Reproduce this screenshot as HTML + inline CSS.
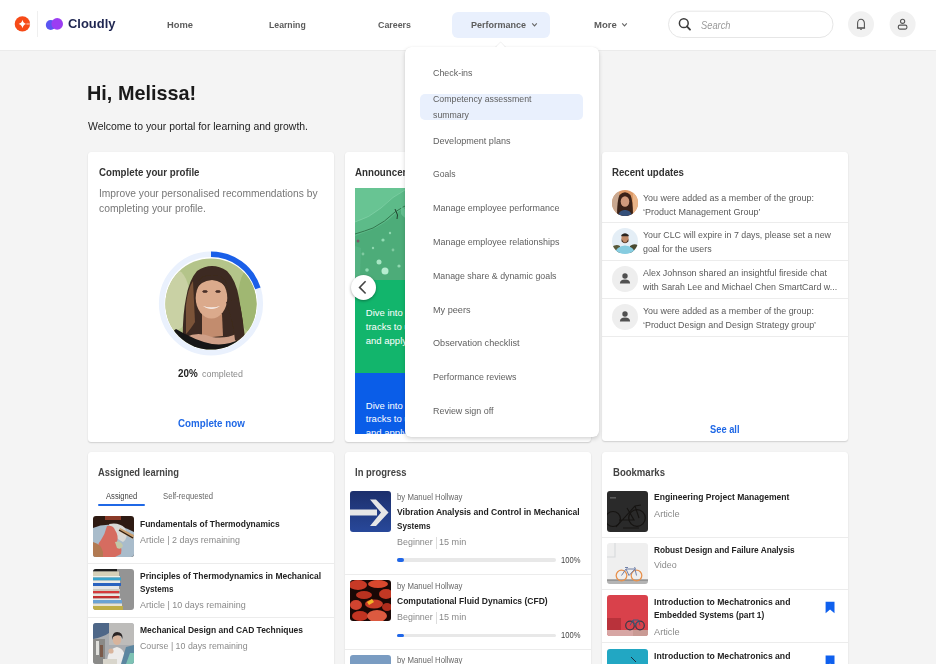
<!DOCTYPE html>
<html><head><meta charset="utf-8">
<style>
html,body{margin:0;padding:0}
body{width:936px;height:664px;overflow:hidden;position:relative;background:#f4f4f4;font-family:'Liberation Sans',sans-serif}
.a{position:absolute}
.t{position:absolute;white-space:pre;line-height:1;transform-origin:0 0}
.card{position:absolute;background:#fff;border-radius:3px;box-shadow:0 1px 1.5px rgba(0,0,0,0.15),0 0 1px rgba(0,0,0,0.07)}
.div{position:absolute;height:1px;background:#ececec}
.th{position:absolute;width:41px;height:41px;border-radius:3px;overflow:hidden}
.th svg{display:block}
</style></head><body>

<!-- header -->
<div class="a" style="left:0;top:0;width:936px;height:50px;background:#fff;border-bottom:1px solid #ebebeb;z-index:1"></div>
<svg class="a" style="left:0;top:0;z-index:2" width="130" height="49">
  <circle cx="22.4" cy="23.9" r="7.7" fill="#f64a17"/>
  <rect x="26.4" y="22.9" width="4" height="2" fill="#fff" opacity="0.4"/>
  <path d="M22.5 19.8 Q23.2 23.2 26 23.9 Q23.2 24.6 22.5 28.2 Q21.8 24.6 18.6 23.9 Q21.8 23.2 22.5 19.8Z" fill="#fff"/>
  <rect x="37" y="11" width="1" height="26" fill="#efefef"/>
  <circle cx="50.7" cy="25" r="4.9" fill="#5a55f2"/>
  <circle cx="57.2" cy="23.9" r="5.8" fill="#9b3df2"/>
</svg>
<div class="a" style="left:451.6px;top:11.6px;width:98.8px;height:26.3px;border-radius:6px;background:#e9f0fd;z-index:2"></div>
<svg class="a" style="left:0;top:0;z-index:3" width="936" height="49">
  <path d="M532.2 23.4 L534.5 25.9 L536.8 23.4" fill="none" stroke="#666" stroke-width="1.1"/>
  <path d="M622.2 23.4 L624.5 25.9 L626.8 23.4" fill="none" stroke="#666" stroke-width="1.1"/>
  <rect x="668.5" y="11.2" width="164.5" height="26.3" rx="13.1" fill="#fff" stroke="#e6e6e6" stroke-width="1"/>
  <circle cx="683.8" cy="23.2" r="4.4" fill="none" stroke="#3c3c3c" stroke-width="1.5"/>
  <path d="M686.9 26.4 L690 29.6" stroke="#3c3c3c" stroke-width="1.9" stroke-linecap="round"/>
  <circle cx="861" cy="24.2" r="13" fill="#f1f1f1"/>
  <path d="M857.6 28 L857.6 23.3 A3.4 4 0 0 1 864.4 23.3 L864.4 28 Z" fill="none" stroke="#555" stroke-width="1.1" stroke-linejoin="round"/>
  <path d="M856.9 28 L865.1 28" stroke="#555" stroke-width="1.1"/>
  <path d="M860 29.2 L862 29.2" stroke="#555" stroke-width="1"/>
  <circle cx="902.6" cy="24.2" r="13" fill="#f1f1f1"/>
  <circle cx="902.6" cy="21.3" r="2.1" fill="none" stroke="#555" stroke-width="1.1"/>
  <rect x="898.3" y="25.1" width="8.6" height="4" rx="1.6" fill="none" stroke="#555" stroke-width="1.1"/>
</svg>

<!-- cards row 1 -->
<div class="card" style="left:88px;top:152px;width:246px;height:290px"></div>
<div class="card" style="left:345px;top:152px;width:246px;height:290px"></div>
<div class="card" style="left:602px;top:152px;width:246px;height:289px"></div>
<!-- cards row 2 -->
<div class="card" style="left:88px;top:452px;width:246px;height:240px"></div>
<div class="card" style="left:345px;top:452px;width:246px;height:240px"></div>
<div class="card" style="left:602px;top:452px;width:246px;height:240px"></div>

<!-- profile ring + photo -->
<svg class="a" style="left:150px;top:242px;z-index:2" width="122" height="122" viewBox="150 242 122 122">
  <defs>
    <clipPath id="pc"><circle cx="211" cy="304" r="45.6"/></clipPath>
    <radialGradient id="bgg" cx="0.5" cy="0.4" r="0.7">
      <stop offset="0" stop-color="#9fb57a"/><stop offset="1" stop-color="#7f9a55"/>
    </radialGradient>
  </defs>
  <circle cx="211" cy="303.5" r="49.3" fill="none" stroke="#eaf1fd" stroke-width="5.6"/>
  <path d="M211 254.2 A49.3 49.3 0 0 1 257.9 288.3" fill="none" stroke="#1a5fe8" stroke-width="5.6"/>
  <filter id="soft" x="-10%" y="-10%" width="120%" height="120%"><feGaussianBlur stdDeviation="0.7"/></filter>
  <g clip-path="url(#pc)">
    <rect x="160" y="255" width="102" height="100" fill="#b4c48a"/>
    <g filter="url(#soft)">
    <ellipse cx="176" cy="300" rx="14" ry="30" fill="#c9d1a4"/>
    <ellipse cx="250" cy="300" rx="12" ry="32" fill="#a0b772"/>
    <path d="M183 345 Q182 318 186 298 Q189 280 197 271 Q212 261 227 271 Q236 280 239 298 Q243 320 246 345 Z" fill="#3d2a20"/>
    <path d="M186 305 Q188 288 193 281 L195 322 Q190 330 186 334Z" fill="#7a5238"/>
    <path d="M202 314 L222 314 L223 336 L202 338Z" fill="#c28c6e"/>
    <ellipse cx="211.5" cy="298" rx="15.8" ry="20.5" fill="#dbaa8c"/>
    <path d="M196 290 Q197 275 212 275 Q227 275 227.5 290 Q223 281 212 280 Q200 281 196 290Z" fill="#3d2a20"/>
    <path d="M186 337 Q198 331 212 337 Q226 339 236 334 L246 352 L178 352Z" fill="#cfa088"/>
    <path d="M166 352 Q168 334 176 329 Q196 341 212 344 Q228 346 240 339 Q252 340 258 352Z" fill="#171514"/>
    <path d="M226 302 Q233 320 235 340 L243 347 Q245 320 238 298Z" fill="#3d2a20"/>
    </g>
    <path d="M203 306 Q211.5 312 220 306 Q211.5 309 203 306Z" fill="#f4e8e2"/>
    <ellipse cx="205" cy="291.5" rx="2.6" ry="1.1" fill="#4a3028"/>
    <ellipse cx="218" cy="291.5" rx="2.6" ry="1.1" fill="#4a3028"/>
  </g>
    <path d="M203 306 Q211.5 312 220 306 Q211.5 309 203 306Z" fill="#f4e8e2"/>
    <ellipse cx="205" cy="291.5" rx="2.6" ry="1.2" fill="#4a3028"/>
    <ellipse cx="218" cy="291.5" rx="2.6" ry="1.2" fill="#4a3028"/>
  </g>
</svg>

<!-- card2 announcement -->
<svg class="a" style="left:355px;top:188px;z-index:2" width="60" height="92">
  <rect width="60" height="92" fill="#4dac79"/>
  <path d="M0 0 L60 0 L60 14 Q48 20 40 26 Q30 36 16 42 Q8 45 0 48Z" fill="#5dbb89"/>
  <path d="M0 34 Q14 30 26 20 Q38 8 50 2 L56 0 L0 0Z" fill="#68c493"/>
  <path d="M0 46 Q10 43 18 40 Q30 34 40 24 Q48 18 60 14" stroke="#33784f" stroke-width="1" fill="none"/>
  <path d="M0 34 Q14 30 26 20 Q38 8 50 2" stroke="#8ad6ae" stroke-width="0.7" fill="none" opacity="0.8"/>
  <path d="M40 21 L42.5 27 L42 31" stroke="#22402e" stroke-width="1" fill="none"/>
  <path d="M46 18 Q52 24 58 20 L60 30 Q52 34 46 26Z" fill="#6cc99a" opacity="0.7"/>
  <circle cx="24" cy="74" r="2.5" fill="#a8e6c4"/>
  <circle cx="30" cy="83" r="3.5" fill="#b6ecd0"/>
  <circle cx="12" cy="82" r="1.8" fill="#92dcb4"/>
  <circle cx="28" cy="52" r="1.6" fill="#92dcb4"/>
  <circle cx="18" cy="60" r="1.2" fill="#8fd8b0"/>
  <circle cx="8" cy="66" r="1.4" fill="#7fcaa0"/>
  <circle cx="38" cy="62" r="1.4" fill="#7fcaa0"/>
  <circle cx="44" cy="78" r="1.6" fill="#8fd8b0"/>
  <circle cx="35" cy="45" r="1.2" fill="#8fd8b0"/>
  <circle cx="3" cy="53" r="1.5" fill="#7a5a6a"/>
  <path d="M0 58 L6 60 L5 90 L0 90Z" fill="#58b484" opacity="0.8"/>
</svg>
<div class="a" style="left:355px;top:279.5px;width:200px;height:93.1px;background:#12b56c;z-index:2"></div>
<div class="a" style="left:355px;top:372.6px;width:200px;height:61px;background:#0a5de8;overflow:hidden;z-index:2"></div>
<div class="a" style="left:350.6px;top:274.8px;width:25.2px;height:25.2px;border-radius:50%;background:#fff;box-shadow:0 1px 3px rgba(0,0,0,0.35);z-index:3"></div>
<svg class="a" style="left:350px;top:274px;z-index:4" width="26" height="26">
  <path d="M15.6 7.3 L9.6 13.4 L15.6 19.5" fill="none" stroke="#444" stroke-width="1.6"/>
</svg>

<!-- card3 recent updates -->
<div class="div" style="left:602px;top:222px;width:246px"></div>
<div class="div" style="left:602px;top:260px;width:246px"></div>
<div class="div" style="left:602px;top:298px;width:246px"></div>
<div class="div" style="left:602px;top:336px;width:246px"></div>
<svg class="a" style="left:610px;top:188px;z-index:2" width="30" height="146" viewBox="610 188 30 146">
  <defs>
    <clipPath id="a1"><circle cx="625" cy="203" r="13"/></clipPath>
    <clipPath id="a2"><circle cx="625" cy="241" r="13"/></clipPath>
  </defs>
  <g clip-path="url(#a1)">
    <rect x="610" y="188" width="30" height="30" fill="#dd9a68"/>
    <rect x="610" y="188" width="9" height="30" fill="#c9a890"/>
    <rect x="633" y="188" width="7" height="30" fill="#e9b488"/>
    <path d="M617 218 Q617 200 619.5 195 Q625 189.5 630.5 195 Q633 200 633 218Z" fill="#3a2218"/>
    <ellipse cx="625" cy="201.5" rx="4.3" ry="5.3" fill="#d09a7c"/>
    <path d="M617 218 Q619 209.5 625 210 Q631 209.5 633 218Z" fill="#35507a"/>
  </g>
  <g clip-path="url(#a2)">
    <rect x="610" y="226" width="30" height="30" fill="#e4eef6"/>
    <path d="M610 248 Q616 243 620 246 L620 256 L610 256Z" fill="#5a5a3a"/>
    <path d="M630 246 Q635 242 640 247 L640 256 L630 256Z" fill="#4a4a30"/>
    <ellipse cx="625" cy="238.5" rx="3.6" ry="4.4" fill="#c08a68"/>
    <path d="M621.6 239 Q625 246 628.4 239 L628.4 241.5 Q625 245 621.6 241.5Z" fill="#4a3426"/>
    <path d="M621.3 235 Q625 231.5 628.7 235 L628.7 236.3 L621.3 236.3Z" fill="#2a2420"/>
    <path d="M614 256 Q615 246.5 625 245.5 Q635 246.5 636 256Z" fill="#86cce0"/>
  </g>
  <circle cx="625" cy="279" r="13" fill="#eeeeee"/>
  <circle cx="625" cy="317" r="13" fill="#eeeeee"/>
  <circle cx="625" cy="276" r="2.7" fill="#505050"/>
  <path d="M619.9 283.6 Q619.9 279.4 625 279.4 Q630.1 279.4 630.1 283.6Z" fill="#505050"/>
  <circle cx="625" cy="314" r="2.7" fill="#505050"/>
  <path d="M619.9 321.6 Q619.9 317.4 625 317.4 Q630.1 317.4 630.1 321.6Z" fill="#505050"/>
</svg>

<!-- dropdown -->
<div class="a" style="left:405px;top:47.2px;width:194px;height:389.4px;background:#fff;border-radius:6px;box-shadow:0 2px 4px rgba(0,0,0,0.16),0 0 1px rgba(0,0,0,0.1);z-index:10"></div>
<svg class="a" style="left:490px;top:39px;z-index:9" width="22" height="12"><path d="M4 9.5 L10.6 3 L17 9.5Z" fill="#fff" stroke="rgba(0,0,0,0.07)" stroke-width="1"/></svg>
<svg class="a" style="left:490px;top:39px;z-index:11" width="22" height="12"><path d="M3 12 L10.6 3.6 L18 12Z" fill="#fff"/></svg>
<div class="a" style="left:420px;top:93.5px;width:163.4px;height:26.3px;background:#e9f0fd;border-radius:5px;z-index:11"></div>

<!-- card4 assigned learning -->
<div class="a" style="left:98px;top:504.2px;width:46.6px;height:2px;border-radius:1px;background:#1f68e6;z-index:2"></div>
<div class="div" style="left:88px;top:563px;width:246px"></div>
<div class="div" style="left:88px;top:617px;width:246px"></div>
<div class="th" style="left:93px;top:516.3px;z-index:2">
  <svg width="41" height="41">
    <rect width="41" height="41" fill="#2e1a12"/>
    <rect x="12" y="0" width="16" height="4" fill="#8a3a28"/>
    <path d="M0 12 Q18 4 41 16 L41 41 L0 41Z" fill="#a9bccb"/>
    <path d="M16 8 Q26 6 32 12 Q36 22 30 26 Q22 22 18 16Z" fill="#d9d9d6"/>
    <path d="M14 10 Q20 9 22 14 Q26 20 24 26 Q30 30 28 38 L22 41 L6 41 Q2 30 8 24 Q12 18 14 10Z" fill="#d66c60"/>
    <path d="M0 26 Q8 28 10 36 L10 41 L0 41Z" fill="#b27a52"/>
    <path d="M22 26 Q28 24 30 30 Q28 34 24 32Z" fill="#c2c8a8"/>
    <path d="M27 12 L41 19 L40 23 L26 15Z" fill="#c9a070"/>
    <path d="M26 14 L40 22" stroke="#2a1a10" stroke-width="1.2"/>
  </svg>
</div>
<div class="th" style="left:93px;top:568.6px;z-index:2">
  <svg width="41" height="41">
    <rect width="41" height="41" fill="#949494"/>
    <rect x="0" y="0" width="24" height="2.5" fill="#1e1e1e"/>
    <rect x="0" y="2.5" width="26" height="4.5" fill="#d6d0b8"/>
    <rect x="0" y="7" width="27" height="1.5" fill="#f0f0ea"/>
    <rect x="0" y="8.5" width="28" height="3" fill="#3aa4cc"/>
    <rect x="0" y="11.5" width="27" height="2.5" fill="#ecebe6"/>
    <rect x="0" y="14" width="28" height="3" fill="#2a62bf"/>
    <rect x="0" y="17" width="26" height="3" fill="#e6e6e6"/>
    <rect x="0" y="20" width="27" height="2" fill="#cfcac0"/>
    <rect x="0" y="22" width="26" height="2.5" fill="#d43a3a"/>
    <rect x="0" y="24.5" width="27" height="2.5" fill="#e8e6e0"/>
    <rect x="0" y="27" width="26" height="2.5" fill="#c2302e"/>
    <rect x="0" y="29.5" width="28" height="1.5" fill="#e8e8e8"/>
    <rect x="0" y="31" width="29" height="3.5" fill="#6aa2d4"/>
    <rect x="0" y="34.5" width="29" height="2.5" fill="#e6e2d6"/>
    <rect x="0" y="37" width="30" height="4" fill="#bfae48"/>
  </svg>
</div>
<div class="th" style="left:93px;top:622.5px;z-index:2">
  <svg width="41" height="41">
    <rect width="41" height="41" fill="#a9acb0"/>
    <rect x="16" y="0" width="25" height="22" fill="#bdbcba"/>
    <path d="M0 0 L16 0 L16 10 Q10 14 0 16Z" fill="#4e6788"/>
    <rect x="0" y="16" width="12" height="25" fill="#8a8a88"/>
    <rect x="3" y="18" width="3" height="14" fill="#e0e0dc"/>
    <rect x="7" y="22" width="3" height="12" fill="#7a5a4a"/>
    <ellipse cx="24" cy="17" rx="4.2" ry="5" fill="#d8b49c"/>
    <path d="M19 17 Q19 9 24 9 Q30 9 29.5 16 L28 13 Q24 11 20 14Z" fill="#2a2424"/>
    <path d="M14 41 Q14 26 24 24 Q33 26 33 41Z" fill="#ecebea"/>
    <circle cx="18" cy="28" r="2.6" fill="#d8b49c"/>
    <path d="M28 41 L33 24 L41 22 L41 41Z" fill="#5c86a0"/>
    <path d="M33 41 L37 30 L41 30 L41 41Z" fill="#7ec2b4"/>
    <rect x="10" y="36" width="14" height="5" fill="#d9d6cc"/>
  </svg>
</div>

<!-- card5 in progress -->
<div class="div" style="left:345px;top:574px;width:246px"></div>
<div class="div" style="left:345px;top:649px;width:246px"></div>
<div class="th" style="left:350px;top:490.6px;z-index:2">
  <svg width="41" height="41">
    <defs><linearGradient id="ag" x1="0" y1="0" x2="0" y2="1"><stop offset="0" stop-color="#1c2f6c"/><stop offset="1" stop-color="#28489a"/></linearGradient></defs>
    <rect width="41" height="41" fill="url(#ag)"/>
    <path d="M0 18.5 L27 18.5 L27 24.5 L0 24.5Z" fill="#e6e6e6"/>
    <path d="M20 8.5 L26 8.5 L38.5 21.5 L26 35 L20 35 L31 21.5Z" fill="#e6e6e6"/>
  </svg>
</div>
<div class="th" style="left:350px;top:579.5px;z-index:2">
  <svg width="41" height="41">
    <rect width="41" height="41" fill="#1a0806"/>
    <ellipse cx="8" cy="5" rx="9" ry="5" fill="#c83a26"/>
    <ellipse cx="28" cy="4" rx="10" ry="4" fill="#d8482e"/>
    <ellipse cx="36" cy="14" rx="7" ry="5" fill="#c23824"/>
    <ellipse cx="14" cy="15" rx="8" ry="4" fill="#b83220"/>
    <ellipse cx="6" cy="25" rx="6" ry="5" fill="#d04430"/>
    <ellipse cx="24" cy="24" rx="9" ry="4.5" fill="#c83c28"/>
    <ellipse cx="37" cy="27" rx="5" ry="4" fill="#b02c1c"/>
    <ellipse cx="10" cy="36" rx="8" ry="5" fill="#c23422"/>
    <ellipse cx="27" cy="36" rx="10" ry="6" fill="#dc5a40"/>
    <path d="M17 22 L22 19 L24 22 L19 25Z" fill="#f2b428"/>
  </svg>
</div>
<div class="th" style="left:350px;top:655px;z-index:2">
  <svg width="41" height="41"><rect width="41" height="41" fill="#7a9cc2"/></svg>
</div>
<div class="a" style="left:396.8px;top:558.2px;width:158.8px;height:3.8px;border-radius:2px;background:#e8e8e8;z-index:2"></div>
<div class="a" style="left:396.8px;top:558.2px;width:7.6px;height:3.8px;border-radius:2px;background:#1f66e8;z-index:3"></div>
<div class="a" style="left:396.8px;top:633.5px;width:158.8px;height:3.8px;border-radius:2px;background:#e8e8e8;z-index:2"></div>
<div class="a" style="left:396.8px;top:633.5px;width:7.6px;height:3.8px;border-radius:2px;background:#1f66e8;z-index:3"></div>
<div class="a" style="left:435.5px;top:536.5px;width:1px;height:12px;background:#dddddd;z-index:2"></div>
<div class="a" style="left:435.5px;top:612px;width:1px;height:12px;background:#dddddd;z-index:2"></div>

<!-- card6 bookmarks -->
<div class="div" style="left:602px;top:537px;width:246px"></div>
<div class="div" style="left:602px;top:589px;width:246px"></div>
<div class="div" style="left:602px;top:642px;width:246px"></div>
<div class="th" style="left:607px;top:490.6px;z-index:2">
  <svg width="42" height="41">
    <rect width="42" height="41" fill="#2a2a2a"/>
    <circle cx="30" cy="27" r="8.3" fill="none" stroke="#161412" stroke-width="1.3"/>
    <circle cx="6" cy="28" r="7.5" fill="none" stroke="#161412" stroke-width="1.2"/>
    <path d="M9 36 L28 15 L34 14 M12 29 L27 29 L20 17 M28 15 L32 27 M16 37 L32 37" fill="none" stroke="#161412" stroke-width="1.1"/>
    <rect x="3" y="6.5" width="6" height="0.8" fill="#888"/>
  </svg>
</div>
<div class="th" style="left:607px;top:542.5px;z-index:2">
  <svg width="42" height="41">
    <rect width="42" height="41" fill="#efefef"/>
    <path d="M8 0 L8 14 L0 14" fill="none" stroke="#d8dadc" stroke-width="1.2"/>
    <rect x="0" y="37" width="42" height="4" fill="#b4b4b4"/>
    <rect x="0" y="36.5" width="42" height="0.9" fill="#6a6a6a"/>
    <circle cx="14.5" cy="32.5" r="5.3" fill="none" stroke="#e8924e" stroke-width="1.3"/>
    <circle cx="29.5" cy="32.5" r="5.3" fill="none" stroke="#e8924e" stroke-width="1.3"/>
    <path d="M14.5 32.5 L19 26 L28 26 L29.5 32.5 M19 26 L22 32.5 L28 26 M18 24.5 L21 24.5 M27.5 24 L28.5 26" fill="none" stroke="#7080a8" stroke-width="1"/>
  </svg>
</div>
<div class="th" style="left:607px;top:594.7px;z-index:2">
  <svg width="42" height="41">
    <rect width="42" height="41" fill="#d9414b"/>
    <rect x="0" y="23" width="14" height="12" fill="#b9323b"/>
    <rect x="0" y="35" width="42" height="6" fill="#d7a6a4"/>
    <rect x="26" y="35" width="16" height="6" fill="#c99a94"/>
    <circle cx="23" cy="30.5" r="4.3" fill="none" stroke="#3a3a48" stroke-width="1.2"/>
    <circle cx="33" cy="30.5" r="4.3" fill="none" stroke="#3a3a48" stroke-width="1.2"/>
    <path d="M23 30.5 L26 25 L31.5 25 L33 30.5 M26 25 L28 30.5 L31.5 25" fill="none" stroke="#4a5a78" stroke-width="1"/>
  </svg>
</div>
<div class="th" style="left:607px;top:648.9px;z-index:2">
  <svg width="42" height="41"><rect width="42" height="41" fill="#22a7c3"/><path d="M24 8 L29 13" stroke="#1a3040" stroke-width="1"/></svg>
</div>
<svg class="a" style="left:820px;top:598px;z-index:2" width="20" height="70">
  <path d="M5.6 3.7 L14.5 3.7 L14.5 15.3 L10.05 11.6 L5.6 15.3Z" fill="#0f60ee"/>
  <path d="M5.6 57.6 L14.5 57.6 L14.5 69.2 L10.05 65.5 L5.6 69.2Z" fill="#0f60ee"/>
</svg>

<div class="t" style="left:67.80px;top:18.27px;font-size:12.2px;font-weight:700;color:#1e2550;z-index:2;transform:scaleX(1.0629);">Cloudly</div>
<div class="t" style="left:167.40px;top:20.07px;font-size:9.9px;font-weight:700;color:#5c5c5c;z-index:2;transform:scaleX(0.9476);">Home</div>
<div class="t" style="left:269.00px;top:20.07px;font-size:9.9px;font-weight:700;color:#5c5c5c;z-index:2;transform:scaleX(0.8800);">Learning</div>
<div class="t" style="left:377.50px;top:20.07px;font-size:9.9px;font-weight:700;color:#5c5c5c;z-index:2;transform:scaleX(0.8968);">Careers</div>
<div class="t" style="left:470.90px;top:20.22px;font-size:9.9px;font-weight:700;color:#5c5c5c;z-index:2;transform:scaleX(0.9126);">Performance</div>
<div class="t" style="left:594.00px;top:20.22px;font-size:9.9px;font-weight:700;color:#5c5c5c;z-index:2;transform:scaleX(0.9621);">More</div>
<div class="t" style="left:700.60px;top:19.61px;font-size:10.5px;font-weight:400;color:#9a9a9a;z-index:5;font-style:italic;transform:scaleX(0.8864);">Search</div>
<div class="t" style="left:87.00px;top:82.12px;font-size:21px;font-weight:700;color:#1a1a1a;z-index:2;transform:scaleX(0.9451);">Hi, Melissa!</div>
<div class="t" style="left:88.30px;top:120.69px;font-size:11px;font-weight:400;color:#1c1c1c;z-index:2;transform:scaleX(0.9502);">Welcome to your portal for learning and growth.</div>
<div class="t" style="left:98.50px;top:167.01px;font-size:10.5px;font-weight:700;color:#333;z-index:2;transform:scaleX(0.9261);">Complete your profile</div>
<div class="t" style="left:98.50px;top:188.39px;font-size:11px;font-weight:400;color:#777;z-index:2;transform:scaleX(0.9307);">Improve your personalised recommendations by</div>
<div class="t" style="left:98.50px;top:203.29px;font-size:11px;font-weight:400;color:#777;z-index:2;transform:scaleX(0.9408);">completing your profile.</div>
<div class="t" style="left:178.30px;top:368.97px;font-size:10.2px;font-weight:700;color:#222;z-index:2;transform:scaleX(0.9661);">20%</div>
<div class="t" style="left:202.00px;top:369.36px;font-size:9.5px;font-weight:400;color:#8a8a8a;z-index:2;transform:scaleX(0.9351);">completed</div>
<div class="t" style="left:177.60px;top:418.41px;font-size:10.5px;font-weight:700;color:#1f68e6;z-index:2;transform:scaleX(0.9308);">Complete now</div>
<div class="t" style="left:355.00px;top:167.01px;font-size:10.5px;font-weight:700;color:#333;z-index:2;transform:scaleX(0.9261);">Announcements</div>
<div class="t" style="left:365.80px;top:307.76px;font-size:9.5px;font-weight:400;color:#ffffff;z-index:2;">Dive into our learning</div>
<div class="t" style="left:365.80px;top:321.66px;font-size:9.5px;font-weight:400;color:#ffffff;z-index:2;">tracks to upskill</div>
<div class="t" style="left:365.80px;top:335.56px;font-size:9.5px;font-weight:400;color:#ffffff;z-index:2;">and apply new skills</div>
<div class="t" style="left:365.80px;top:400.76px;font-size:9.5px;font-weight:400;color:#ffffff;z-index:2;">Dive into our learning</div>
<div class="t" style="left:365.80px;top:414.46px;font-size:9.5px;font-weight:400;color:#ffffff;z-index:2;">tracks to upskill</div>
<div class="t" style="left:365.80px;top:428.16px;font-size:9.5px;font-weight:400;color:#ffffff;z-index:2;">and apply new skills</div>
<div class="t" style="left:612.00px;top:167.01px;font-size:10.5px;font-weight:700;color:#333;z-index:2;transform:scaleX(0.9209);">Recent updates</div>
<div class="t" style="left:643.40px;top:192.76px;font-size:9.5px;font-weight:400;color:#5a5a5a;z-index:2;transform:scaleX(0.9370);">You were added as a member of the group:</div>
<div class="t" style="left:643.40px;top:207.16px;font-size:9.5px;font-weight:400;color:#5a5a5a;z-index:2;transform:scaleX(0.9461);">‘Product Management Group’</div>
<div class="t" style="left:643.40px;top:229.96px;font-size:9.5px;font-weight:400;color:#5a5a5a;z-index:2;transform:scaleX(0.9287);">Your CLC will expire in 7 days, please set a new</div>
<div class="t" style="left:643.40px;top:244.36px;font-size:9.5px;font-weight:400;color:#5a5a5a;z-index:2;transform:scaleX(0.9345);">goal for the users</div>
<div class="t" style="left:643.40px;top:267.66px;font-size:9.5px;font-weight:400;color:#5a5a5a;z-index:2;transform:scaleX(0.9391);">Alex Johnson shared an insightful fireside chat</div>
<div class="t" style="left:643.40px;top:282.06px;font-size:9.5px;font-weight:400;color:#5a5a5a;z-index:2;transform:scaleX(0.9329);">with Sarah Lee and Michael Chen SmartCard w...</div>
<div class="t" style="left:643.40px;top:305.66px;font-size:9.5px;font-weight:400;color:#5a5a5a;z-index:2;transform:scaleX(0.9370);">You were added as a member of the group:</div>
<div class="t" style="left:643.40px;top:320.06px;font-size:9.5px;font-weight:400;color:#5a5a5a;z-index:2;transform:scaleX(0.9365);">‘Product Design and Design Strategy group’</div>
<div class="t" style="left:710.20px;top:424.11px;font-size:10.5px;font-weight:700;color:#1f68e6;z-index:2;transform:scaleX(0.8864);">See all</div>
<div class="t" style="left:433.30px;top:67.66px;font-size:9.5px;font-weight:400;color:#606060;z-index:12;transform:scaleX(0.9349);">Check-ins</div>
<div class="t" style="left:433.30px;top:94.46px;font-size:9.5px;font-weight:400;color:#606060;z-index:12;transform:scaleX(0.9234);">Competency assessment</div>
<div class="t" style="left:433.30px;top:109.66px;font-size:9.5px;font-weight:400;color:#606060;z-index:12;transform:scaleX(0.9216);">summary</div>
<div class="t" style="left:433.30px;top:135.66px;font-size:9.5px;font-weight:400;color:#606060;z-index:12;transform:scaleX(0.9529);">Development plans</div>
<div class="t" style="left:433.30px;top:169.46px;font-size:9.5px;font-weight:400;color:#606060;z-index:12;transform:scaleX(0.9062);">Goals</div>
<div class="t" style="left:433.30px;top:203.46px;font-size:9.5px;font-weight:400;color:#606060;z-index:12;transform:scaleX(0.9430);">Manage employee performance</div>
<div class="t" style="left:433.30px;top:237.46px;font-size:9.5px;font-weight:400;color:#606060;z-index:12;transform:scaleX(0.9430);">Manage employee relationships</div>
<div class="t" style="left:433.30px;top:271.46px;font-size:9.5px;font-weight:400;color:#606060;z-index:12;transform:scaleX(0.9280);">Manage share &amp; dynamic goals</div>
<div class="t" style="left:433.30px;top:305.46px;font-size:9.5px;font-weight:400;color:#606060;z-index:12;transform:scaleX(0.9596);">My peers</div>
<div class="t" style="left:433.30px;top:338.46px;font-size:9.5px;font-weight:400;color:#606060;z-index:12;transform:scaleX(0.9580);">Observation checklist</div>
<div class="t" style="left:433.30px;top:372.46px;font-size:9.5px;font-weight:400;color:#606060;z-index:12;transform:scaleX(0.9357);">Performance reviews</div>
<div class="t" style="left:433.30px;top:406.46px;font-size:9.5px;font-weight:400;color:#606060;z-index:12;transform:scaleX(0.9416);">Review sign off</div>
<div class="t" style="left:98.20px;top:466.81px;font-size:10.5px;font-weight:700;color:#444;z-index:2;transform:scaleX(0.8898);">Assigned learning</div>
<div class="t" style="left:105.70px;top:492.00px;font-size:8.5px;font-weight:400;color:#444;z-index:2;transform:scaleX(0.8951);">Assigned</div>
<div class="t" style="left:163.00px;top:492.00px;font-size:8.5px;font-weight:400;color:#666;z-index:2;transform:scaleX(0.9042);">Self-requested</div>
<div class="t" style="left:140.00px;top:518.86px;font-size:9.5px;font-weight:700;color:#222;z-index:2;transform:scaleX(0.8880);">Fundamentals of Thermodynamics</div>
<div class="t" style="left:140.00px;top:536.13px;font-size:9.3px;font-weight:400;color:#8a8a8a;z-index:2;transform:scaleX(0.9595);">Article | 2 days remaining</div>
<div class="t" style="left:140.00px;top:570.86px;font-size:9.5px;font-weight:700;color:#222;z-index:2;transform:scaleX(0.8905);">Principles of Thermodynamics in Mechanical</div>
<div class="t" style="left:140.00px;top:584.26px;font-size:9.5px;font-weight:700;color:#222;z-index:2;transform:scaleX(0.8544);">Systems</div>
<div class="t" style="left:140.00px;top:601.03px;font-size:9.3px;font-weight:400;color:#8a8a8a;z-index:2;transform:scaleX(0.9663);">Article | 10 days remaining</div>
<div class="t" style="left:140.00px;top:624.76px;font-size:9.5px;font-weight:700;color:#222;z-index:2;transform:scaleX(0.8906);">Mechanical Design and CAD Techniques</div>
<div class="t" style="left:140.00px;top:641.53px;font-size:9.3px;font-weight:400;color:#8a8a8a;z-index:2;transform:scaleX(0.9486);">Course | 10 days remaining</div>
<div class="t" style="left:355.30px;top:466.81px;font-size:10.5px;font-weight:700;color:#444;z-index:2;transform:scaleX(0.9005);">In progress</div>
<div class="t" style="left:396.60px;top:493.10px;font-size:8.5px;font-weight:400;color:#666;z-index:2;transform:scaleX(0.9167);">by Manuel Hollway</div>
<div class="t" style="left:396.60px;top:506.96px;font-size:9.5px;font-weight:700;color:#222;z-index:2;transform:scaleX(0.8990);">Vibration Analysis and Control in Mechanical</div>
<div class="t" style="left:396.60px;top:520.66px;font-size:9.5px;font-weight:700;color:#222;z-index:2;transform:scaleX(0.8544);">Systems</div>
<div class="t" style="left:396.60px;top:537.71px;font-size:9.2px;font-weight:400;color:#888;z-index:2;transform:scaleX(0.9733);">Beginner</div>
<div class="t" style="left:438.80px;top:537.71px;font-size:9.2px;font-weight:400;color:#888;z-index:2;transform:scaleX(0.9863);">15 min</div>
<div class="t" style="left:561.00px;top:556.10px;font-size:8.5px;font-weight:400;color:#444;z-index:2;transform:scaleX(0.8920);">100%</div>
<div class="t" style="left:396.60px;top:581.90px;font-size:8.5px;font-weight:400;color:#666;z-index:2;transform:scaleX(0.9167);">by Manuel Hollway</div>
<div class="t" style="left:396.60px;top:595.76px;font-size:9.5px;font-weight:700;color:#222;z-index:2;transform:scaleX(0.8979);">Computational Fluid Dynamics (CFD)</div>
<div class="t" style="left:396.60px;top:612.81px;font-size:9.2px;font-weight:400;color:#888;z-index:2;transform:scaleX(0.9733);">Beginner</div>
<div class="t" style="left:438.80px;top:612.81px;font-size:9.2px;font-weight:400;color:#888;z-index:2;transform:scaleX(0.9863);">15 min</div>
<div class="t" style="left:561.00px;top:631.20px;font-size:8.5px;font-weight:400;color:#444;z-index:2;transform:scaleX(0.8920);">100%</div>
<div class="t" style="left:396.60px;top:656.00px;font-size:8.5px;font-weight:400;color:#666;z-index:2;transform:scaleX(0.9167);">by Manuel Hollway</div>
<div class="t" style="left:612.90px;top:466.81px;font-size:10.5px;font-weight:700;color:#444;z-index:2;transform:scaleX(0.9090);">Bookmarks</div>
<div class="t" style="left:654.30px;top:492.46px;font-size:9.5px;font-weight:700;color:#222;z-index:2;transform:scaleX(0.8999);">Engineering Project Management</div>
<div class="t" style="left:654.30px;top:509.53px;font-size:9.3px;font-weight:400;color:#8a8a8a;z-index:2;transform:scaleX(0.9944);">Article</div>
<div class="t" style="left:654.30px;top:544.76px;font-size:9.5px;font-weight:700;color:#222;z-index:2;transform:scaleX(0.8700);">Robust Design and Failure Analysis</div>
<div class="t" style="left:654.30px;top:561.43px;font-size:9.3px;font-weight:400;color:#8a8a8a;z-index:2;transform:scaleX(0.9608);">Video</div>
<div class="t" style="left:654.30px;top:596.96px;font-size:9.5px;font-weight:700;color:#222;z-index:2;transform:scaleX(0.9068);">Introduction to Mechatronics and</div>
<div class="t" style="left:654.30px;top:610.26px;font-size:9.5px;font-weight:700;color:#222;z-index:2;transform:scaleX(0.8815);">Embedded Systems (part 1)</div>
<div class="t" style="left:654.30px;top:627.53px;font-size:9.3px;font-weight:400;color:#8a8a8a;z-index:2;transform:scaleX(0.9944);">Article</div>
<div class="t" style="left:654.30px;top:650.96px;font-size:9.5px;font-weight:700;color:#222;z-index:2;transform:scaleX(0.9068);">Introduction to Mechatronics and</div>
</body></html>
